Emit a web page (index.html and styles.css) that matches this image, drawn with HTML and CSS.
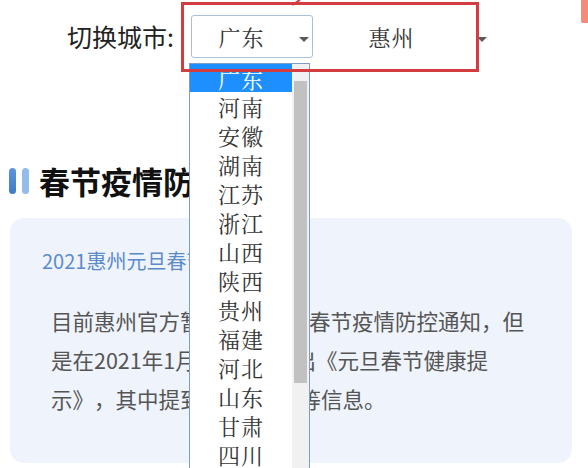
FILE: index.html
```html
<!DOCTYPE html>
<html lang="zh-CN">
<head>
<meta charset="utf-8">
<title>切换城市</title>
<link rel="stylesheet" href="styles.css">
</head>
<body>
<div class="page">
  <div class="city-row">
    <span class="city-label">切换城市:</span>
    <div class="select select-bordered">
      <span class="select-text">广东</span>
      <span class="select-arrow"></span>
    </div>
    <div class="select select-plain">
      <span class="select-text">惠州</span>
      <span class="select-arrow"></span>
    </div>
  </div>

  <h2 class="section-title"><span class="title-bars"><i class="bar bar-dark"></i><i class="bar bar-light"></i></span>春节疫情防控通知</h2>

  <div class="card">
    <a class="card-link" href="#">2021惠州元旦春节防疫政策</a>
    <p class="card-text">目前惠州官方暂未发布今年春节疫情防控通知，但是在2021年1月8日官方发出《元旦春节健康提示》，其中提到需隔离7天等信息。</p>
  </div>

  <div class="dropdown">
    <ul class="options">
      <li class="option active">广东</li>
      <li class="option">河南</li>
      <li class="option">安徽</li>
      <li class="option">湖南</li>
      <li class="option">江苏</li>
      <li class="option">浙江</li>
      <li class="option">山西</li>
      <li class="option">陕西</li>
      <li class="option">贵州</li>
      <li class="option">福建</li>
      <li class="option">河北</li>
      <li class="option">山东</li>
      <li class="option">甘肃</li>
      <li class="option">四川</li>
    </ul>
    <div class="scrollbar"><div class="scroll-thumb"></div></div>
  </div>

  <div class="annot-box"></div>
  <svg class="annot-tail" width="14" height="8" viewBox="0 0 14 8"><path d="M2 6 L10 1" stroke="#d43d3f" stroke-width="2" fill="none"/></svg>
  <div class="corner-tab"></div>
</div>
</body>
</html>
```

FILE: styles.css
```css
* { box-sizing: border-box; }
html, body {
  margin: 0;
  padding: 0;
  background: #ffffff;
}
body {
  font-family: "Noto Sans CJK SC", "Noto Sans", sans-serif;
  color: #333;
  overflow: hidden;
  text-spacing-trim: space-all;
}
.page {
  position: relative;
  width: 588px;
  height: 468px;
  overflow: hidden;
}

/* top row */
.city-row {
  display: flex;
  align-items: center;
  padding: 15px 0 0 67px;
}
.city-label {
  width: 124px;
  font-size: 25px;
  line-height: 43px;
  color: #222;
}
.select {
  display: flex;
  align-items: center;
  height: 43px;
}
.select-bordered {
  width: 122px;
  border: 1px solid #a9bfdc;
  border-radius: 3px;
}
.select-plain {
  width: 176px;
  border: 1px solid transparent;
}
.select-text {
  flex: 1;
  text-align: center;
  font-family: "Noto Serif CJK SC", "Noto Sans CJK SC", serif;
  font-size: 22px;
  letter-spacing: 1px;
  color: #333;
  padding-right: 8px;
  line-height: 1;
}
.select-arrow {
  width: 0;
  height: 0;
  border-left: 5px solid transparent;
  border-right: 5px solid transparent;
  border-top: 5px solid #5a5a5a;
  margin: 5px 3px 0 0;
}
.select-plain .select-arrow { margin-right: 1px; }

/* section title */
.section-title {
  display: flex;
  align-items: center;
  margin: 103px 0 0 9px;
  height: 40px;
  font-size: 31px;
  font-weight: 700;
  color: #111;
  line-height: 40px;
}
.title-bars {
  display: flex;
  gap: 6px;
  margin-right: 10px;
}
.bar {
  display: block;
  width: 7px;
  height: 26px;
  border-radius: 4px;
}
.bar-dark { background: linear-gradient(#5c96d8, #3f7cc6); }
.bar-light { background: #93bce9; }

/* card */
.card {
  margin: 17px 16px 0 10px;
  height: 245px;
  background: #eff3fb;
  border-radius: 14px;
  padding: 29px 32px 0 32px;
}
.card-link {
  display: block;
  font-size: 20px;
  line-height: 27px;
  color: #5a8ccc;
  text-decoration: none;
}
.card-text {
  margin: 27px 0 0 9px;
  width: 480px;
  font-size: 21.5px;
  line-height: 39px;
  color: #555;
}

/* open dropdown list */
.dropdown {
  position: absolute;
  left: 189px;
  top: 63px;
  width: 121px;
  height: 420px;
  display: flex;
  background: #fff;
  border: 1px solid #7f9dc4;
  border-bottom: none;
  z-index: 5;
}
.options {
  list-style: none;
  margin: 0;
  padding: 0;
  width: 102px;
}
.option {
  height: 29px;
  display: flex;
  align-items: center;
  justify-content: center;
  font-family: "Noto Serif CJK SC", "Noto Sans CJK SC", serif;
  font-size: 22px;
  letter-spacing: 1px;
  color: #333;
}
.option.active {
  background: #1e8fff;
  color: #fff;
  height: 28px;
}
.scrollbar {
  width: 17px;
  background: #f1f1f1;
  padding: 17px 2px 0 2px;
}
.scroll-thumb {
  width: 13px;
  height: 302px;
  background: #c1c1c1;
}

/* annotation overlays */
.annot-box {
  position: absolute;
  left: 181px;
  top: 2px;
  width: 298px;
  height: 70px;
  border: 3px solid #d43d3f;
  z-index: 10;
}
.annot-tail {
  position: absolute;
  left: 290px;
  top: -1px;
  z-index: 10;
}
.corner-tab {
  position: absolute;
  left: 581px;
  top: 0;
  width: 7px;
  height: 23px;
  background: #f38a7b;
  border-bottom-left-radius: 2px;
}
```
